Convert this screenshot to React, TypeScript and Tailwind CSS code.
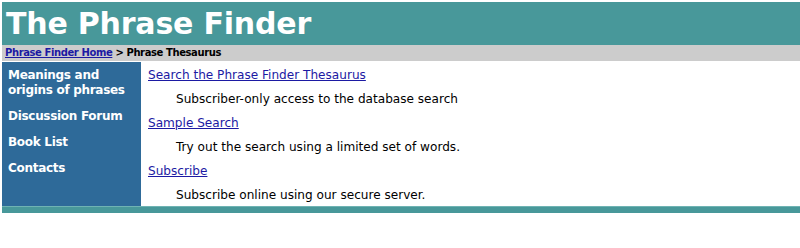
export default function App() {
  const font = { fontFamily: '"DejaVu Sans", Verdana, sans-serif' };
  return (
    <div className="bg-white p-[2px] pr-0 text-black" style={font}>
      <header className="flex h-[43px] items-center bg-[#48989a] pl-[4px]">
        <h1 className="text-[30px] font-bold leading-none tracking-[-0.2px] text-white">The Phrase Finder</h1>
      </header>
      <nav className="flex h-[16px] items-center bg-[#cccccc] pl-[3px] text-[10px] font-bold leading-none tracking-[-0.4px]">
        <a href="#" className="text-[#1c1aa3] underline">Phrase Finder Home</a>
        <span>&nbsp;&gt; Phrase Thesaurus</span>
      </nav>
      <div className="mt-[1px] flex h-[144px]">
        <aside className="flex w-[139px] flex-col gap-[11px] bg-[#2e6a99] px-[6px] pt-[6px] text-[12px] font-bold leading-[15px] tracking-[-0.3px] text-white">
          <span>Meanings and origins of phrases</span>
          <span>Discussion Forum</span>
          <span>Book List</span>
          <span>Contacts</span>
        </aside>
        <main className="flex flex-1 flex-col pl-[7px] pt-[5px] text-[12.1px] leading-[16px]">
          <a href="#" className="text-[#1c1aa3] underline">Search the Phrase Finder Thesaurus</a>
          <p className="mt-[8px] pl-[28px]">Subscriber-only access to the database search</p>
          <a href="#" className="mt-[8px] text-[#1c1aa3] underline">Sample Search</a>
          <p className="mt-[8px] pl-[28px]">Try out the search using a limited set of words.</p>
          <a href="#" className="mt-[8px] text-[#1c1aa3] underline">Subscribe</a>
          <p className="mt-[8px] pl-[28px]">Subscribe online using our secure server.</p>
        </main>
      </div>
      <div className="h-[7px] border-t border-[#6fb3b3] bg-[#48989a]" />
    </div>
  );
}
